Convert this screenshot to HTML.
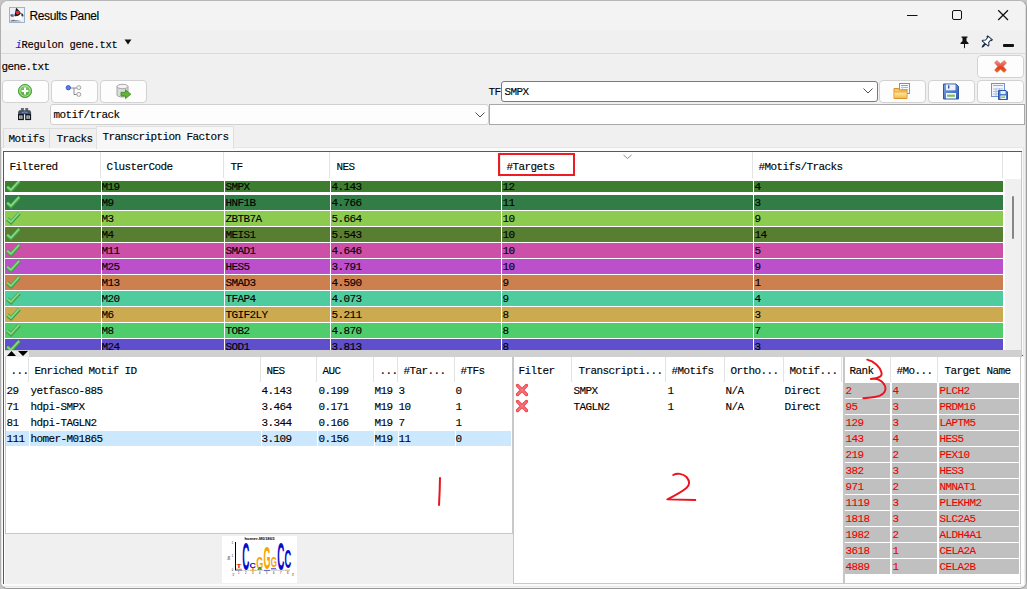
<!DOCTYPE html><html><head><meta charset="utf-8"><title>Results Panel</title><style>
*{box-sizing:border-box;margin:0;padding:0}
html,body{width:1027px;height:589px;overflow:hidden;background:#c4c4c4}
body{position:relative;font-family:"Liberation Mono","DejaVu Sans Mono",monospace;font-size:11px;letter-spacing:-.6px;color:#000}
.ab,.t,.btn,.hs,.cell{position:absolute}
.t{-webkit-text-stroke:.12px currentColor;white-space:nowrap;line-height:18px;height:18px;margin-left:-.6px}
.r{color:#f00000}
#win{position:absolute;left:0;top:0;width:1027px;height:589px;background:#f0f0f0;border:1px solid;border-color:#b6b6b6 #9c9c9c #999 #b0b0b0;border-radius:8px;overflow:hidden}
#in{position:absolute;left:-1px;top:-1px;width:1027px;height:589px}
.btn{height:23px;width:47px;background:#fdfdfd;border:1px solid #d2d2d2;border-radius:4px}
.hs{width:1px;background:#e3e3e3}
</style></head><body>
<div id="win"><div id="in">
<div class="ab" style="left:0;top:0;width:1027px;height:30px;background:#f3f3f3"></div>
<svg class="ab" style="left:9px;top:7px" width="16" height="16" viewBox="0 0 16 16">
<rect x="0.5" y="0.5" width="15" height="15" fill="#eceef8" stroke="#9cb4cc"/>
<path d="M1.5 13.4 C4 12.2 9 12.4 12.4 14.2 L1.5 14.5Z" fill="#7a7a7a"/>
<path d="M4.6 8 C5 11.5 5.4 12.8 6 13.3 L12.4 13.6 C12.7 11 12.5 8.5 11.6 6.4 L8 9 Z" fill="#fdfdfd"/>
<path d="M7.1 0.8 C6.6 3.5 5.8 6.5 5.4 9 C7.5 9.9 10.6 8.6 11.9 6.2 C10.5 4 8.5 2 7.1 0.8Z" fill="#1c1c1c"/>
<circle cx="8.6" cy="5.6" r="1.9" fill="#f02a2a"/>
<path d="M1.2 8.3 C2 6.9 3.5 6.8 4.6 7.6 L4.8 9.6 C3.5 10.1 2 9.9 1.2 8.3Z" fill="#5c5c5c"/>
<circle cx="3.4" cy="7.6" r=".9" fill="#5b9be0"/>
<path d="M12.2 6.4 C13.5 6.1 14.6 7.4 14.4 9.3 C13.6 9.9 12.8 9.2 12.4 8.4Z" fill="#3a3a3a"/>
</svg>
<div class="t" style="left:30px;top:8px;font:12px 'Liberation Sans',sans-serif;letter-spacing:-.35px;line-height:16px">Results Panel</div>
<svg class="ab" style="left:900px;top:0" width="127" height="30" viewBox="0 0 127 30" fill="none" stroke="#111" stroke-width="1">
<path d="M7 15.5 H17.5"/>
<rect x="52.5" y="10.5" width="9" height="9" rx="1.5"/>
<path d="M98.2 10.2 L108 20 M108 10.2 L98.2 20" stroke-width="1.25"/>
</svg>
<div class="t" style="left:16px;top:36px;font-size:10.5px;letter-spacing:-.3px"><span style="color:#1a1ad0;font-style:italic">i</span>Regulon gene.txt</div>
<svg class="ab" style="left:124px;top:39px" width="8" height="6"><path d="M0.5 0.5 H7.5 L4 5.5 Z" fill="#111"/></svg>
<svg class="ab" style="left:958px;top:35px" width="60" height="14" viewBox="0 0 60 14">
<path d="M3.5 1.5 H9.5 V2.8 H8.5 V6 L10.5 8 V9 H7 V12.5 L6.5 13.5 L6 12.5 V9 H2.5 V8 L4.5 6 V2.8 H3.5 Z" fill="#111"/>
<g transform="translate(28.5,7) rotate(40)"><path d="M-3 -5.5 H3 V-4.3 H2 V-1 L4 1 V2 H0.5 V5.5 L0 6.5 L-0.5 5.5 V2 H-4 V1 L-2 -1 V-4.3 H-3 Z" fill="#fff" stroke="#1b2a4a" stroke-width="1"/></g>
<rect x="45" y="9" width="11" height="3" rx="1" fill="#111"/>
</svg>
<div class="ab" style="left:0;top:53px;width:1027px;height:1px;background:#dadada"></div>
<div class="t" style="left:2px;top:58px">gene.txt</div>
<div class="btn" style="left:977px;top:55px"></div>
<svg class="ab" style="left:994px;top:60px" width="13" height="13" viewBox="0 0 13 13"><defs><linearGradient id="rx" x1="0" y1="0" x2="0" y2="1"><stop offset="0" stop-color="#f29484"/><stop offset=".45" stop-color="#e65a42"/><stop offset=".55" stop-color="#df3e1e"/><stop offset="1" stop-color="#ee6424"/></linearGradient></defs><path d="M2.8 0.5 L6.5 3.7 L10.2 0.5 L12.5 2.8 L9.2 6.4 L12.4 10.1 L10.1 12.4 L6.5 9.2 L2.9 12.4 L0.6 10.1 L3.8 6.4 L0.5 2.8 Z" fill="url(#rx)" stroke="#d65038" stroke-width=".5" stroke-linejoin="round"/></svg>
<div class="btn" style="left:2px;top:80px"></div>
<div class="btn" style="left:51px;top:80px"></div>
<div class="btn" style="left:100px;top:80px"></div>
<div class="btn" style="left:879px;top:80px"></div>
<div class="btn" style="left:928px;top:80px"></div>
<div class="btn" style="left:977px;top:80px"></div>
<svg class="ab" style="left:17px;top:83px" width="16" height="16" viewBox="0 0 16 16"><defs><linearGradient id="gp" x1="0" y1="0" x2="0" y2="1"><stop offset="0" stop-color="#86cf70"/><stop offset="1" stop-color="#4aa838"/></linearGradient></defs><circle cx="8" cy="8" r="6.6" fill="url(#gp)" stroke="#4fa63c" stroke-width="1"/><circle cx="8" cy="8" r="5.2" fill="none" stroke="#bce6ae" stroke-width=".9"/><path d="M8 4.6 V11.4 M4.6 8 H11.4" stroke="#fff" stroke-width="2"/></svg>
<svg class="ab" style="left:65px;top:84px" width="18" height="15" viewBox="0 0 18 15"><path d="M5 4 H9 V10.5 H12 M9 4 H12" fill="none" stroke="#8a8a8a" stroke-width="1"/><circle cx="3.3" cy="3.7" r="2.2" fill="#5b7de8" stroke="#2f4fc0" stroke-width=".8"/><circle cx="13.8" cy="3.6" r="2" fill="#f4f4f4" stroke="#9a9a9a" stroke-width=".9"/><circle cx="13.8" cy="10.4" r="2" fill="#f4f4f4" stroke="#9a9a9a" stroke-width=".9"/></svg>
<svg class="ab" style="left:116px;top:83px" width="16" height="17" viewBox="0 0 16 17"><path d="M1 3.5 V12 C1 14.6 12 14.6 12 12 V3.5" fill="#dcdcdc" stroke="#9a9a9a" stroke-width=".9"/><ellipse cx="6.5" cy="3.5" rx="5.5" ry="2.2" fill="#f2f2f2" stroke="#9a9a9a" stroke-width=".9"/><path d="M5 9.3 H9.5 V6.8 L14.8 11.2 L9.5 15.6 V13 H5 Z" fill="#63b33b" stroke="#3f8f24" stroke-width=".9" stroke-linejoin="round"/></svg>
<div class="t" style="left:489px;top:83px">TF</div>
<div class="ab" style="left:501px;top:81px;width:377px;height:21px;background:#fff;border:1px solid #7a7a7a;border-radius:3px"></div>
<div class="t" style="left:505px;top:83px">SMPX</div>
<svg class="ab" style="left:863px;top:88px" width="10" height="6"><path d="M0.5 0.5 L5 5 L9.5 0.5" fill="none" stroke="#505050" stroke-width="1"/></svg>
<svg class="ab" style="left:893px;top:83px" width="18" height="17" viewBox="0 0 18 17"><defs><linearGradient id="fo" x1="0" y1="0" x2="0" y2="1"><stop offset="0" stop-color="#fdeaa8"/><stop offset="1" stop-color="#f6bd48"/></linearGradient></defs><rect x="6.5" y="0.5" width="10" height="10" fill="#f6f9fe" stroke="#6d93d0"/><path d="M8 2.5 H15" stroke="#7fc05e" stroke-width="1"/><path d="M10 4.5 H15 M10 6.5 H15 M8 4.5 H9 M8 6.5 H9" stroke="#a8b8d0" stroke-width="1"/><path d="M9.5 3.5 V8" stroke="#c8d4e8" stroke-width="1"/><path d="M1 5.5 H5.5 L6.5 7 H14 V15.5 H1 Z" fill="#f7c862" stroke="#dc922c" stroke-width="1"/><path d="M1.5 9.5 H13.5 V15 H1.5Z" fill="url(#fo)"/><path d="M1.5 9 H13.5" stroke="#e8a63c" stroke-width=".8"/></svg>
<svg class="ab" style="left:942px;top:83px" width="18" height="17" viewBox="0 0 18 17"><defs><linearGradient id="sv" x1="0" y1="0" x2="1" y2="1"><stop offset="0" stop-color="#7ea4e4"/><stop offset="1" stop-color="#3058b2"/></linearGradient></defs><path d="M1.5 1 H14 L16.5 3.5 V16 H1.5 Z" fill="url(#sv)" stroke="#2d56a8" stroke-width="1"/><rect x="4" y="1.5" width="9.5" height="5.8" fill="#eef3fb"/><rect x="6" y="2.3" width="1.4" height="3.2" fill="#35589c"/><rect x="4" y="10" width="10" height="5.5" fill="#f6f9fc"/><rect x="5" y="11.6" width="8" height="2.2" fill="#7fc05e"/></svg>
<svg class="ab" style="left:991px;top:83px" width="18" height="17" viewBox="0 0 18 17"><rect x="0.5" y="0.5" width="13" height="13" fill="#f2f6fc" stroke="#6d93d0"/><path d="M2 2.5 H12" stroke="#8fc274" stroke-width="1"/><path d="M2 6 H12 M2 8.5 H12 M2 11 H12 M5 5 V13 M8.5 5 V13" stroke="#a9c0e4" stroke-width="1"/><path d="M7.5 7.5 H15 L16.5 9 V16.5 H7.5 Z" fill="#4a78c8" stroke="#2d56a8" stroke-width="1"/><rect x="9.5" y="8" width="5" height="3" fill="#e8eef8"/><rect x="9.5" y="12.5" width="5.5" height="3.5" fill="#f4f7fb"/><rect x="10.2" y="13.5" width="4" height="1.4" fill="#7fc05e"/></svg>
<div class="ab" style="left:1025px;top:96px;width:2px;height:15px;background:#8a5a3c"></div>
<svg class="ab" style="left:18px;top:108px" width="14" height="13" viewBox="0 0 14 13"><rect x="2.9" y="0" width="3" height="3" fill="#5d6c82"/><rect x="7.2" y="0" width="3" height="3" fill="#5d6c82"/><path d="M1.2 2.3 H12 L13.1 4 V6.3 H0.1 V4 Z" fill="#465060"/><path d="M3.8 4.6 Q6.6 3.4 9.6 4.6" stroke="#7aa0d8" stroke-width=".9" fill="none"/><rect x="0" y="6" width="5.9" height="6.1" fill="#14171b"/><rect x="7.2" y="6" width="5.9" height="6.1" fill="#14171b"/><rect x="1.1" y="7.4" width="3.5" height="3.5" fill="#b4c0cc"/><rect x="8.4" y="7.4" width="3.5" height="3.5" fill="#b4c0cc"/><rect x="2.5" y="7.4" width=".8" height="3.5" fill="#5a6470"/><rect x="9.8" y="7.4" width=".8" height="3.5" fill="#5a6470"/></svg>
<div class="ab" style="left:50px;top:104px;width:439px;height:21px;background:#fdfdfd;border:1px solid #d0d0d0;border-radius:3px"></div>
<div class="t" style="left:54px;top:106px">motif/track</div>
<svg class="ab" style="left:475px;top:112px" width="10" height="6"><path d="M0.5 0.5 L5 5 L9.5 0.5" fill="none" stroke="#505050" stroke-width="1"/></svg>
<div class="ab" style="left:489px;top:104px;width:536px;height:21px;background:#fff;border:1px solid #a8a8a8"></div>
<div class="ab" style="left:1px;top:147px;width:1023px;height:440px;background:#fbfbfb;border:1px solid #e6e6e6"></div>
<div class="ab" style="left:3px;top:128px;width:47px;height:20px;background:#f0f0f0;border:1px solid #dcdcdc;border-bottom:none"></div>
<div class="ab" style="left:49px;top:128px;width:48px;height:20px;background:#f0f0f0;border:1px solid #dcdcdc;border-bottom:none"></div>
<div class="ab" style="left:96px;top:126px;width:138px;height:23px;background:#f7f7f7;border:1px solid #e0e0e0;border-bottom:none"></div>
<div class="t" style="left:9px;top:130px">Motifs</div>
<div class="t" style="left:57px;top:130px">Tracks</div>
<div class="t" style="left:103px;top:128px">Transcription Factors</div>
<div class="ab" style="left:3px;top:151px;width:1019px;height:206px;background:#fff;border-left:1px solid #5a5a5a;border-top:1px solid #5a5a5a"></div>
<div class="ab" style="left:1021px;top:152px;width:1px;height:205px;background:#c8c8c8"></div>
<div class="ab" style="left:1022px;top:355px;width:1px;height:1px;background:#555"></div>
<div class="hs" style="left:100px;top:152px;height:26px"></div>
<div class="hs" style="left:223px;top:152px;height:26px"></div>
<div class="hs" style="left:329px;top:152px;height:26px"></div>
<div class="hs" style="left:500px;top:152px;height:26px"></div>
<div class="hs" style="left:752px;top:152px;height:26px"></div>
<div class="hs" style="left:1002px;top:152px;height:26px"></div>
<div class="t" style="left:10px;top:158px">Filtered</div>
<div class="t" style="left:107px;top:158px">ClusterCode</div>
<div class="t" style="left:231px;top:158px">TF</div>
<div class="t" style="left:337px;top:158px">NES</div>
<div class="t" style="left:507px;top:158px">#Targets</div>
<div class="t" style="left:759px;top:158px">#Motifs/Tracks</div>
<svg class="ab" style="left:623px;top:154px" width="9" height="6"><path d="M0.5 1 L4.5 4.5 L8.5 1" fill="none" stroke="#8a8a8a" stroke-width="1"/></svg>
<div class="ab" style="left:498px;top:153px;width:77px;height:23px;border:2px solid #ec1c24"></div>
<div class="ab" style="left:5px;top:181px;width:998px;height:169px;overflow:hidden">
<div class="ab" style="left:0;top:-2px;width:998px;height:15px;background:#3c7d2f">
<div class="ab" style="left:96px;top:0;width:1px;height:15px;background:#fff"></div>
<div class="ab" style="left:219px;top:0;width:1px;height:15px;background:#fff"></div>
<div class="ab" style="left:325px;top:0;width:1px;height:15px;background:#fff"></div>
<div class="ab" style="left:496px;top:0;width:1px;height:15px;background:#fff"></div>
<div class="ab" style="left:748px;top:0;width:1px;height:15px;background:#fff"></div>
<svg class="ab" style="left:0;top:0" width="17" height="15" viewBox="0 0 17 15"><path d="M2.3 8 L6 11.3 L14.4 2.2" fill="none" stroke="#40a040" stroke-width="3.7"/><path d="M2.2 7.7 L5.9 10.9 L14.2 1.9" fill="none" stroke="#86d686" stroke-width="1.9"/></svg>
<div class="t" style="left:97px;top:-1px">M19</div>
<div class="t" style="left:221px;top:-1px">SMPX</div>
<div class="t" style="left:327px;top:-1px">4.143</div>
<div class="t" style="left:498px;top:-1px">12</div>
<div class="t" style="left:750px;top:-1px">4</div>
</div>
<div class="ab" style="left:0;top:14px;width:998px;height:15px;background:#327d46">
<div class="ab" style="left:96px;top:0;width:1px;height:15px;background:#fff"></div>
<div class="ab" style="left:219px;top:0;width:1px;height:15px;background:#fff"></div>
<div class="ab" style="left:325px;top:0;width:1px;height:15px;background:#fff"></div>
<div class="ab" style="left:496px;top:0;width:1px;height:15px;background:#fff"></div>
<div class="ab" style="left:748px;top:0;width:1px;height:15px;background:#fff"></div>
<svg class="ab" style="left:0;top:0" width="17" height="15" viewBox="0 0 17 15"><path d="M2.3 8 L6 11.3 L14.4 2.2" fill="none" stroke="#40a040" stroke-width="3.7"/><path d="M2.2 7.7 L5.9 10.9 L14.2 1.9" fill="none" stroke="#86d686" stroke-width="1.9"/></svg>
<div class="t" style="left:97px;top:-1px">M9</div>
<div class="t" style="left:221px;top:-1px">HNF1B</div>
<div class="t" style="left:327px;top:-1px">4.766</div>
<div class="t" style="left:498px;top:-1px">11</div>
<div class="t" style="left:750px;top:-1px">3</div>
</div>
<div class="ab" style="left:0;top:30px;width:998px;height:15px;background:#8ccb4f">
<div class="ab" style="left:96px;top:0;width:1px;height:15px;background:#fff"></div>
<div class="ab" style="left:219px;top:0;width:1px;height:15px;background:#fff"></div>
<div class="ab" style="left:325px;top:0;width:1px;height:15px;background:#fff"></div>
<div class="ab" style="left:496px;top:0;width:1px;height:15px;background:#fff"></div>
<div class="ab" style="left:748px;top:0;width:1px;height:15px;background:#fff"></div>
<svg class="ab" style="left:0;top:0" width="17" height="15" viewBox="0 0 17 15"><path d="M2.3 8 L6 11.3 L14.4 2.2" fill="none" stroke="#40a040" stroke-width="3.7"/><path d="M2.2 7.7 L5.9 10.9 L14.2 1.9" fill="none" stroke="#86d686" stroke-width="1.9"/></svg>
<div class="t" style="left:97px;top:-1px">M3</div>
<div class="t" style="left:221px;top:-1px">ZBTB7A</div>
<div class="t" style="left:327px;top:-1px">5.664</div>
<div class="t" style="left:498px;top:-1px">10</div>
<div class="t" style="left:750px;top:-1px">9</div>
</div>
<div class="ab" style="left:0;top:46px;width:998px;height:15px;background:#587e31">
<div class="ab" style="left:96px;top:0;width:1px;height:15px;background:#fff"></div>
<div class="ab" style="left:219px;top:0;width:1px;height:15px;background:#fff"></div>
<div class="ab" style="left:325px;top:0;width:1px;height:15px;background:#fff"></div>
<div class="ab" style="left:496px;top:0;width:1px;height:15px;background:#fff"></div>
<div class="ab" style="left:748px;top:0;width:1px;height:15px;background:#fff"></div>
<svg class="ab" style="left:0;top:0" width="17" height="15" viewBox="0 0 17 15"><path d="M2.3 8 L6 11.3 L14.4 2.2" fill="none" stroke="#40a040" stroke-width="3.7"/><path d="M2.2 7.7 L5.9 10.9 L14.2 1.9" fill="none" stroke="#86d686" stroke-width="1.9"/></svg>
<div class="t" style="left:97px;top:-1px">M4</div>
<div class="t" style="left:221px;top:-1px">MEIS1</div>
<div class="t" style="left:327px;top:-1px">5.543</div>
<div class="t" style="left:498px;top:-1px">10</div>
<div class="t" style="left:750px;top:-1px">14</div>
</div>
<div class="ab" style="left:0;top:62px;width:998px;height:15px;background:#cc4fa8">
<div class="ab" style="left:96px;top:0;width:1px;height:15px;background:#fff"></div>
<div class="ab" style="left:219px;top:0;width:1px;height:15px;background:#fff"></div>
<div class="ab" style="left:325px;top:0;width:1px;height:15px;background:#fff"></div>
<div class="ab" style="left:496px;top:0;width:1px;height:15px;background:#fff"></div>
<div class="ab" style="left:748px;top:0;width:1px;height:15px;background:#fff"></div>
<svg class="ab" style="left:0;top:0" width="17" height="15" viewBox="0 0 17 15"><path d="M2.3 8 L6 11.3 L14.4 2.2" fill="none" stroke="#40a040" stroke-width="3.7"/><path d="M2.2 7.7 L5.9 10.9 L14.2 1.9" fill="none" stroke="#86d686" stroke-width="1.9"/></svg>
<div class="t" style="left:97px;top:-1px">M11</div>
<div class="t" style="left:221px;top:-1px">SMAD1</div>
<div class="t" style="left:327px;top:-1px">4.646</div>
<div class="t" style="left:498px;top:-1px">10</div>
<div class="t" style="left:750px;top:-1px">5</div>
</div>
<div class="ab" style="left:0;top:78px;width:998px;height:15px;background:#bb4fcc">
<div class="ab" style="left:96px;top:0;width:1px;height:15px;background:#fff"></div>
<div class="ab" style="left:219px;top:0;width:1px;height:15px;background:#fff"></div>
<div class="ab" style="left:325px;top:0;width:1px;height:15px;background:#fff"></div>
<div class="ab" style="left:496px;top:0;width:1px;height:15px;background:#fff"></div>
<div class="ab" style="left:748px;top:0;width:1px;height:15px;background:#fff"></div>
<svg class="ab" style="left:0;top:0" width="17" height="15" viewBox="0 0 17 15"><path d="M2.3 8 L6 11.3 L14.4 2.2" fill="none" stroke="#40a040" stroke-width="3.7"/><path d="M2.2 7.7 L5.9 10.9 L14.2 1.9" fill="none" stroke="#86d686" stroke-width="1.9"/></svg>
<div class="t" style="left:97px;top:-1px">M25</div>
<div class="t" style="left:221px;top:-1px">HES5</div>
<div class="t" style="left:327px;top:-1px">3.791</div>
<div class="t" style="left:498px;top:-1px">10</div>
<div class="t" style="left:750px;top:-1px">9</div>
</div>
<div class="ab" style="left:0;top:94px;width:998px;height:15px;background:#cc7f4f">
<div class="ab" style="left:96px;top:0;width:1px;height:15px;background:#fff"></div>
<div class="ab" style="left:219px;top:0;width:1px;height:15px;background:#fff"></div>
<div class="ab" style="left:325px;top:0;width:1px;height:15px;background:#fff"></div>
<div class="ab" style="left:496px;top:0;width:1px;height:15px;background:#fff"></div>
<div class="ab" style="left:748px;top:0;width:1px;height:15px;background:#fff"></div>
<svg class="ab" style="left:0;top:0" width="17" height="15" viewBox="0 0 17 15"><path d="M2.3 8 L6 11.3 L14.4 2.2" fill="none" stroke="#40a040" stroke-width="3.7"/><path d="M2.2 7.7 L5.9 10.9 L14.2 1.9" fill="none" stroke="#86d686" stroke-width="1.9"/></svg>
<div class="t" style="left:97px;top:-1px">M13</div>
<div class="t" style="left:221px;top:-1px">SMAD3</div>
<div class="t" style="left:327px;top:-1px">4.590</div>
<div class="t" style="left:498px;top:-1px">9</div>
<div class="t" style="left:750px;top:-1px">1</div>
</div>
<div class="ab" style="left:0;top:110px;width:998px;height:15px;background:#4fcc9d">
<div class="ab" style="left:96px;top:0;width:1px;height:15px;background:#fff"></div>
<div class="ab" style="left:219px;top:0;width:1px;height:15px;background:#fff"></div>
<div class="ab" style="left:325px;top:0;width:1px;height:15px;background:#fff"></div>
<div class="ab" style="left:496px;top:0;width:1px;height:15px;background:#fff"></div>
<div class="ab" style="left:748px;top:0;width:1px;height:15px;background:#fff"></div>
<svg class="ab" style="left:0;top:0" width="17" height="15" viewBox="0 0 17 15"><path d="M2.3 8 L6 11.3 L14.4 2.2" fill="none" stroke="#40a040" stroke-width="3.7"/><path d="M2.2 7.7 L5.9 10.9 L14.2 1.9" fill="none" stroke="#86d686" stroke-width="1.9"/></svg>
<div class="t" style="left:97px;top:-1px">M20</div>
<div class="t" style="left:221px;top:-1px">TFAP4</div>
<div class="t" style="left:327px;top:-1px">4.073</div>
<div class="t" style="left:498px;top:-1px">9</div>
<div class="t" style="left:750px;top:-1px">4</div>
</div>
<div class="ab" style="left:0;top:126px;width:998px;height:15px;background:#ccaa4f">
<div class="ab" style="left:96px;top:0;width:1px;height:15px;background:#fff"></div>
<div class="ab" style="left:219px;top:0;width:1px;height:15px;background:#fff"></div>
<div class="ab" style="left:325px;top:0;width:1px;height:15px;background:#fff"></div>
<div class="ab" style="left:496px;top:0;width:1px;height:15px;background:#fff"></div>
<div class="ab" style="left:748px;top:0;width:1px;height:15px;background:#fff"></div>
<svg class="ab" style="left:0;top:0" width="17" height="15" viewBox="0 0 17 15"><path d="M2.3 8 L6 11.3 L14.4 2.2" fill="none" stroke="#40a040" stroke-width="3.7"/><path d="M2.2 7.7 L5.9 10.9 L14.2 1.9" fill="none" stroke="#86d686" stroke-width="1.9"/></svg>
<div class="t" style="left:97px;top:-1px">M6</div>
<div class="t" style="left:221px;top:-1px">TGIF2LY</div>
<div class="t" style="left:327px;top:-1px">5.211</div>
<div class="t" style="left:498px;top:-1px">8</div>
<div class="t" style="left:750px;top:-1px">3</div>
</div>
<div class="ab" style="left:0;top:142px;width:998px;height:15px;background:#4fcc6c">
<div class="ab" style="left:96px;top:0;width:1px;height:15px;background:#fff"></div>
<div class="ab" style="left:219px;top:0;width:1px;height:15px;background:#fff"></div>
<div class="ab" style="left:325px;top:0;width:1px;height:15px;background:#fff"></div>
<div class="ab" style="left:496px;top:0;width:1px;height:15px;background:#fff"></div>
<div class="ab" style="left:748px;top:0;width:1px;height:15px;background:#fff"></div>
<svg class="ab" style="left:0;top:0" width="17" height="15" viewBox="0 0 17 15"><path d="M2.3 8 L6 11.3 L14.4 2.2" fill="none" stroke="#40a040" stroke-width="3.7"/><path d="M2.2 7.7 L5.9 10.9 L14.2 1.9" fill="none" stroke="#86d686" stroke-width="1.9"/></svg>
<div class="t" style="left:97px;top:-1px">M8</div>
<div class="t" style="left:221px;top:-1px">TOB2</div>
<div class="t" style="left:327px;top:-1px">4.870</div>
<div class="t" style="left:498px;top:-1px">8</div>
<div class="t" style="left:750px;top:-1px">7</div>
</div>
<div class="ab" style="left:0;top:158px;width:998px;height:15px;background:#5f4fcc">
<div class="ab" style="left:96px;top:0;width:1px;height:15px;background:#fff"></div>
<div class="ab" style="left:219px;top:0;width:1px;height:15px;background:#fff"></div>
<div class="ab" style="left:325px;top:0;width:1px;height:15px;background:#fff"></div>
<div class="ab" style="left:496px;top:0;width:1px;height:15px;background:#fff"></div>
<div class="ab" style="left:748px;top:0;width:1px;height:15px;background:#fff"></div>
<svg class="ab" style="left:0;top:0" width="17" height="15" viewBox="0 0 17 15"><path d="M2.3 8 L6 11.3 L14.4 2.2" fill="none" stroke="#40a040" stroke-width="3.7"/><path d="M2.2 7.7 L5.9 10.9 L14.2 1.9" fill="none" stroke="#86d686" stroke-width="1.9"/></svg>
<div class="t" style="left:97px;top:-1px">M24</div>
<div class="t" style="left:221px;top:-1px">SOD1</div>
<div class="t" style="left:327px;top:-1px">3.813</div>
<div class="t" style="left:498px;top:-1px">8</div>
<div class="t" style="left:750px;top:-1px">3</div>
</div>
</div>
<div class="ab" style="left:5px;top:192px;width:998px;height:3px;background:#fff"></div>
<div class="ab" style="left:1003px;top:179px;width:2px;height:171px;background:#fff"></div>
<div class="ab" style="left:1005px;top:179px;width:16px;height:171px;background:#f0f0f0"></div>
<div class="ab" style="left:1003px;top:152px;width:18px;height:27px;background:#fff"></div>
<div class="ab" style="left:1012px;top:196px;width:2px;height:43px;background:#868686;border-radius:1px"></div>
<div class="ab" style="left:5px;top:350px;width:1016px;height:7px;background:#d0d0d0"></div>
<div class="ab" style="left:5px;top:351px;width:24px;height:6px;background:#ebebeb"></div>
<svg class="ab" style="left:6px;top:350px" width="24" height="7"><path d="M1 6 L5.5 1 L10 6 Z M12 1 L22 1 L17 6 Z" fill="#000"/></svg>
<div class="ab" style="left:4px;top:357px;width:509px;height:227px;background:#f0f0f0"></div>
<div class="ab" style="left:4px;top:357px;width:1px;height:227px;background:#fff"></div>
<div class="ab" style="left:3px;top:357px;width:1px;height:227px;background:#5a5a5a"></div>
<div class="ab" style="left:5px;top:357px;width:508px;height:177px;background:#fff;border-left:1px solid #c8c8c8;border-right:1px solid #c8c8c8;border-bottom:1px solid #c8c8c8"></div>
<div class="ab" style="left:513px;top:357px;width:1px;height:227px;background:#c8c8c8"></div>
<div class="hs" style="left:28px;top:357px;height:25px"></div>
<div class="hs" style="left:260px;top:357px;height:25px"></div>
<div class="hs" style="left:316px;top:357px;height:25px"></div>
<div class="hs" style="left:373px;top:357px;height:25px"></div>
<div class="hs" style="left:397px;top:357px;height:25px"></div>
<div class="hs" style="left:454px;top:357px;height:25px"></div>
<div class="t" style="left:11px;top:362px">...</div>
<div class="t" style="left:35px;top:362px">Enriched Motif ID</div>
<div class="t" style="left:267px;top:362px">NES</div>
<div class="t" style="left:323px;top:362px">AUC</div>
<div class="t" style="left:380px;top:362px">...</div>
<div class="t" style="left:404px;top:362px">#Tar...</div>
<div class="t" style="left:461px;top:362px">#TFs</div>
<div class="t" style="left:7px;top:382px">29</div>
<div class="t" style="left:31px;top:382px">yetfasco-885</div>
<div class="t" style="left:262px;top:382px">4.143</div>
<div class="t" style="left:319px;top:382px">0.199</div>
<div class="t" style="left:375px;top:382px">M19</div>
<div class="t" style="left:399px;top:382px">3</div>
<div class="t" style="left:456px;top:382px">0</div>
<div class="t" style="left:7px;top:398px">71</div>
<div class="t" style="left:31px;top:398px">hdpi-SMPX</div>
<div class="t" style="left:262px;top:398px">3.464</div>
<div class="t" style="left:319px;top:398px">0.171</div>
<div class="t" style="left:375px;top:398px">M19</div>
<div class="t" style="left:399px;top:398px">10</div>
<div class="t" style="left:456px;top:398px">1</div>
<div class="t" style="left:7px;top:414px">81</div>
<div class="t" style="left:31px;top:414px">hdpi-TAGLN2</div>
<div class="t" style="left:262px;top:414px">3.344</div>
<div class="t" style="left:319px;top:414px">0.166</div>
<div class="t" style="left:375px;top:414px">M19</div>
<div class="t" style="left:399px;top:414px">7</div>
<div class="t" style="left:456px;top:414px">1</div>
<div class="ab" style="left:6px;top:431px;width:23px;height:15px;background:#cce8ff"></div>
<div class="ab" style="left:30px;top:431px;width:231px;height:15px;background:#cce8ff"></div>
<div class="ab" style="left:262px;top:431px;width:55px;height:15px;background:#cce8ff"></div>
<div class="ab" style="left:318px;top:431px;width:56px;height:15px;background:#cce8ff"></div>
<div class="ab" style="left:375px;top:431px;width:23px;height:15px;background:#cce8ff"></div>
<div class="ab" style="left:399px;top:431px;width:56px;height:15px;background:#cce8ff"></div>
<div class="ab" style="left:456px;top:431px;width:55px;height:15px;background:#cce8ff"></div>
<div class="t" style="left:7px;top:430px">111</div>
<div class="t" style="left:31px;top:430px">homer-M01865</div>
<div class="t" style="left:262px;top:430px">3.109</div>
<div class="t" style="left:319px;top:430px">0.156</div>
<div class="t" style="left:375px;top:430px">M19</div>
<div class="t" style="left:399px;top:430px">11</div>
<div class="t" style="left:456px;top:430px">0</div>
<svg class="ab" style="left:430px;top:470px" width="20" height="40" viewBox="430 470 20 40"><path d="M440 477.3 L439.7 490 L439 505.7" fill="none" stroke="#ea141e" stroke-width="2"/></svg>
<svg class="ab" style="left:222px;top:536px" width="75" height="47" viewBox="0 0 75 47">
<rect width="75" height="47" fill="#fff"/>
<text x="37.5" y="4.2" font-family="Liberation Sans,sans-serif" font-size="4.3" font-weight="bold" text-anchor="middle" letter-spacing="0" fill="#000">homer-M01865</text>
<path d="M13.5 6 V34.5" stroke="#000" stroke-width="1"/>
<path d="M13 34.5 H68" stroke="#999" stroke-width=".4"/>
<g font-family="Liberation Sans,sans-serif" font-weight="bold" letter-spacing="0">
<text transform="translate(20.3,33.6) scale(0.62,2.42)" font-size="16" fill="#0a0acc">C</text>
<text transform="translate(27.6,31.6) scale(0.55,0.45)" font-size="16" fill="#0a0acc">C</text>
<text transform="translate(34.3,32.5) scale(0.56,1.05)" font-size="16" fill="#f5a300">G</text>
<text transform="translate(41.6,32.6) scale(0.56,2.0)" font-size="16" fill="#f5a300">G</text>
<text transform="translate(48.8,31) scale(0.5,0.9)" font-size="16" fill="#f5a300">G</text>
<text transform="translate(55.3,33.6) scale(0.62,2.42)" font-size="16" fill="#0a0acc">C</text>
<text transform="translate(62.5,32.4) scale(0.58,1.66)" font-size="16" fill="#0a0acc">C</text>
<text transform="translate(14.5,31.5) scale(0.5,0.28)" font-size="16" fill="#cc0a0a">T</text>
<text transform="translate(29,33.8) scale(0.4,0.22)" font-size="16" fill="#cc0a0a">T</text>
<text transform="translate(35,34.3) scale(0.45,0.2)" font-size="16" fill="#0aa00a">A</text>
</g>
<path d="M14 33 H20 M28 34.2 H34 M49 33.5 H55 M63 34 H68" stroke="#f5a300" stroke-width=".7"/>
<path d="M14 34 H20 M42 34.4 H48 M49 32.5 H54" stroke="#0a0acc" stroke-width=".6"/>
<g font-family="Liberation Sans,sans-serif" font-size="2.6" fill="#000" letter-spacing="0"><text x="9.8" y="7.5">2</text><text x="9.8" y="21">1</text><text x="9.8" y="35">0</text><text x="10.5" y="39.5">5'</text><text x="70" y="39.5">3'</text>
<text x="16" y="37.5">1</text><text x="23" y="37.5">2</text><text x="30" y="37.5">3</text><text x="37" y="37.5">4</text><text x="44" y="37.5">5</text><text x="51" y="37.5">6</text><text x="58" y="37.5">7</text><text x="65" y="37.5">8</text>
<text transform="translate(7.5,24) rotate(-90)">bits</text></g>
</svg>
<div class="ab" style="left:514px;top:357px;width:328px;height:226px;background:#fff"></div>
<div class="hs" style="left:571px;top:357px;height:25px"></div>
<div class="hs" style="left:665px;top:357px;height:25px"></div>
<div class="hs" style="left:724px;top:357px;height:25px"></div>
<div class="hs" style="left:783px;top:357px;height:25px"></div>
<div class="hs" style="left:841px;top:357px;height:25px"></div>
<div class="t" style="left:519px;top:362px">Filter</div>
<div class="t" style="left:579px;top:362px">Transcripti...</div>
<div class="t" style="left:672px;top:362px">#Motifs</div>
<div class="t" style="left:731px;top:362px">Ortho...</div>
<div class="t" style="left:790px;top:362px">Motif...</div>
<svg class="ab" style="left:515px;top:383px" width="14" height="14" viewBox="0 0 14 14"><path d="M2.5 2.5 L11.5 11.5 M11.5 2.5 L2.5 11.5" stroke="#ec3640" stroke-width="3.2" stroke-linecap="round"/><path d="M2.7 2.7 L11.3 11.3 M11.3 2.7 L2.7 11.3" stroke="#f8747c" stroke-width="1.7" stroke-linecap="round"/></svg>
<div class="t" style="left:574px;top:382px">SMPX</div>
<div class="t" style="left:668px;top:382px">1</div>
<div class="t" style="left:726px;top:382px">N/A</div>
<div class="t" style="left:785px;top:382px">Direct</div>
<svg class="ab" style="left:515px;top:399px" width="14" height="14" viewBox="0 0 14 14"><path d="M2.5 2.5 L11.5 11.5 M11.5 2.5 L2.5 11.5" stroke="#ec3640" stroke-width="3.2" stroke-linecap="round"/><path d="M2.7 2.7 L11.3 11.3 M11.3 2.7 L2.7 11.3" stroke="#f8747c" stroke-width="1.7" stroke-linecap="round"/></svg>
<div class="t" style="left:574px;top:398px">TAGLN2</div>
<div class="t" style="left:668px;top:398px">1</div>
<div class="t" style="left:726px;top:398px">N/A</div>
<div class="t" style="left:785px;top:398px">Direct</div>
<svg class="ab" style="left:660px;top:468px" width="44" height="40" viewBox="660 468 44 40"><path d="M673.2 475 C677 472.8 683 473.5 686.5 477 C690 481 690 485 686.4 488 C681 492.5 673 496.5 667.3 499.4 L695.3 500" fill="none" stroke="#ea141e" stroke-width="1.9" stroke-linecap="round" stroke-linejoin="round"/></svg>
<div class="ab" style="left:843px;top:357px;width:2px;height:226px;background:#c8c8c8"></div>
<div class="ab" style="left:845px;top:357px;width:175px;height:226px;background:#fff"></div>
<div class="hs" style="left:890px;top:357px;height:25px"></div>
<div class="hs" style="left:937px;top:357px;height:25px"></div>
<div class="t" style="left:850px;top:362px">Rank</div>
<div class="t" style="left:897px;top:362px">#Mo...</div>
<div class="t" style="left:945px;top:362px">Target Name</div>
<div class="ab" style="left:845px;top:383px;width:45px;height:15px;background:#c0c0c0"></div>
<div class="t r" style="left:846px;top:382px">2</div>
<div class="ab" style="left:892px;top:383px;width:45px;height:15px;background:#c0c0c0"></div>
<div class="t r" style="left:893px;top:382px">4</div>
<div class="ab" style="left:939px;top:383px;width:80px;height:15px;background:#c0c0c0"></div>
<div class="t r" style="left:940px;top:382px">PLCH2</div>
<div class="ab" style="left:845px;top:399px;width:45px;height:15px;background:#c0c0c0"></div>
<div class="t r" style="left:846px;top:398px">95</div>
<div class="ab" style="left:892px;top:399px;width:45px;height:15px;background:#c0c0c0"></div>
<div class="t r" style="left:893px;top:398px">3</div>
<div class="ab" style="left:939px;top:399px;width:80px;height:15px;background:#c0c0c0"></div>
<div class="t r" style="left:940px;top:398px">PRDM16</div>
<div class="ab" style="left:845px;top:415px;width:45px;height:15px;background:#c0c0c0"></div>
<div class="t r" style="left:846px;top:414px">129</div>
<div class="ab" style="left:892px;top:415px;width:45px;height:15px;background:#c0c0c0"></div>
<div class="t r" style="left:893px;top:414px">3</div>
<div class="ab" style="left:939px;top:415px;width:80px;height:15px;background:#c0c0c0"></div>
<div class="t r" style="left:940px;top:414px">LAPTM5</div>
<div class="ab" style="left:845px;top:431px;width:45px;height:15px;background:#c0c0c0"></div>
<div class="t r" style="left:846px;top:430px">143</div>
<div class="ab" style="left:892px;top:431px;width:45px;height:15px;background:#c0c0c0"></div>
<div class="t r" style="left:893px;top:430px">4</div>
<div class="ab" style="left:939px;top:431px;width:80px;height:15px;background:#c0c0c0"></div>
<div class="t r" style="left:940px;top:430px">HES5</div>
<div class="ab" style="left:845px;top:447px;width:45px;height:15px;background:#c0c0c0"></div>
<div class="t r" style="left:846px;top:446px">219</div>
<div class="ab" style="left:892px;top:447px;width:45px;height:15px;background:#c0c0c0"></div>
<div class="t r" style="left:893px;top:446px">2</div>
<div class="ab" style="left:939px;top:447px;width:80px;height:15px;background:#c0c0c0"></div>
<div class="t r" style="left:940px;top:446px">PEX10</div>
<div class="ab" style="left:845px;top:463px;width:45px;height:15px;background:#c0c0c0"></div>
<div class="t r" style="left:846px;top:462px">382</div>
<div class="ab" style="left:892px;top:463px;width:45px;height:15px;background:#c0c0c0"></div>
<div class="t r" style="left:893px;top:462px">3</div>
<div class="ab" style="left:939px;top:463px;width:80px;height:15px;background:#c0c0c0"></div>
<div class="t r" style="left:940px;top:462px">HES3</div>
<div class="ab" style="left:845px;top:479px;width:45px;height:15px;background:#c0c0c0"></div>
<div class="t r" style="left:846px;top:478px">971</div>
<div class="ab" style="left:892px;top:479px;width:45px;height:15px;background:#c0c0c0"></div>
<div class="t r" style="left:893px;top:478px">2</div>
<div class="ab" style="left:939px;top:479px;width:80px;height:15px;background:#c0c0c0"></div>
<div class="t r" style="left:940px;top:478px">NMNAT1</div>
<div class="ab" style="left:845px;top:495px;width:45px;height:15px;background:#c0c0c0"></div>
<div class="t r" style="left:846px;top:494px">1119</div>
<div class="ab" style="left:892px;top:495px;width:45px;height:15px;background:#c0c0c0"></div>
<div class="t r" style="left:893px;top:494px">3</div>
<div class="ab" style="left:939px;top:495px;width:80px;height:15px;background:#c0c0c0"></div>
<div class="t r" style="left:940px;top:494px">PLEKHM2</div>
<div class="ab" style="left:845px;top:511px;width:45px;height:15px;background:#c0c0c0"></div>
<div class="t r" style="left:846px;top:510px">1818</div>
<div class="ab" style="left:892px;top:511px;width:45px;height:15px;background:#c0c0c0"></div>
<div class="t r" style="left:893px;top:510px">3</div>
<div class="ab" style="left:939px;top:511px;width:80px;height:15px;background:#c0c0c0"></div>
<div class="t r" style="left:940px;top:510px">SLC2A5</div>
<div class="ab" style="left:845px;top:527px;width:45px;height:15px;background:#c0c0c0"></div>
<div class="t r" style="left:846px;top:526px">1982</div>
<div class="ab" style="left:892px;top:527px;width:45px;height:15px;background:#c0c0c0"></div>
<div class="t r" style="left:893px;top:526px">2</div>
<div class="ab" style="left:939px;top:527px;width:80px;height:15px;background:#c0c0c0"></div>
<div class="t r" style="left:940px;top:526px">ALDH4A1</div>
<div class="ab" style="left:845px;top:543px;width:45px;height:15px;background:#c0c0c0"></div>
<div class="t r" style="left:846px;top:542px">3618</div>
<div class="ab" style="left:892px;top:543px;width:45px;height:15px;background:#c0c0c0"></div>
<div class="t r" style="left:893px;top:542px">1</div>
<div class="ab" style="left:939px;top:543px;width:80px;height:15px;background:#c0c0c0"></div>
<div class="t r" style="left:940px;top:542px">CELA2A</div>
<div class="ab" style="left:845px;top:559px;width:45px;height:15px;background:#c0c0c0"></div>
<div class="t r" style="left:846px;top:558px">4889</div>
<div class="ab" style="left:892px;top:559px;width:45px;height:15px;background:#c0c0c0"></div>
<div class="t r" style="left:893px;top:558px">1</div>
<div class="ab" style="left:939px;top:559px;width:80px;height:15px;background:#c0c0c0"></div>
<div class="t r" style="left:940px;top:558px">CELA2B</div>
<svg class="ab" style="left:855px;top:354px" width="40" height="50" viewBox="855 354 40 50"><path d="M867.2 359.6 C874 361 880 367 881.5 372.4 C882.5 376.5 879 378.2 870.9 379 C876.5 378 882.5 380 885 386 C887 392 882 396 874.7 397 C870 397.8 866 398 863.3 398.3" fill="none" stroke="#ea141e" stroke-width="1.9" stroke-linecap="round" stroke-linejoin="round"/></svg>
<div class="ab" style="left:1020px;top:357px;width:1px;height:227px;background:#c8c8c8"></div>
<div class="ab" style="left:1021px;top:357px;width:3px;height:227px;background:#fff"></div>
<div class="ab" style="left:514px;top:583px;width:507px;height:1px;background:#c8c8c8"></div>
<div class="ab" style="left:0;top:584px;width:1027px;height:2px;background:#fbfbfb"></div>
<div class="ab" style="left:0;top:586px;width:1027px;height:1px;background:#e6e6e6"></div>
<div class="ab" style="left:0;top:587px;width:1027px;height:1px;background:#f4f4f4"></div>
<div class="ab" style="left:1025px;top:0;width:1px;height:588px;background:#dcdcdc"></div>
</div></div>
</body></html>
